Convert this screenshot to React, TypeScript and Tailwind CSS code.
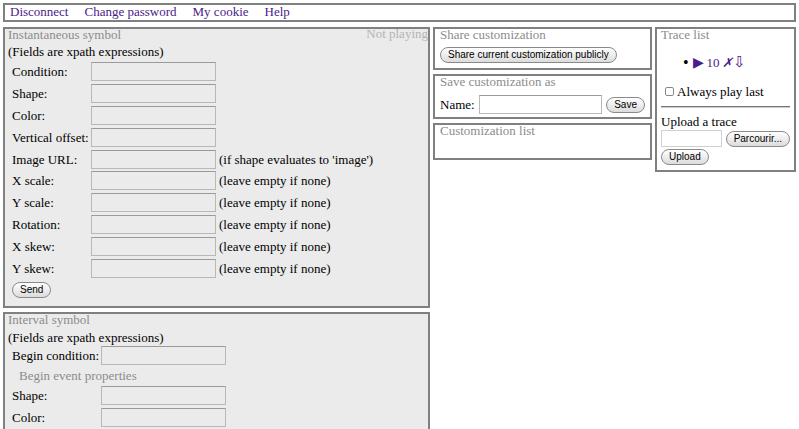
import React from 'react';

const serif = { fontFamily: '"Liberation Serif", "Times New Roman", serif' };

function Btn({ children, className = '' }: { children: React.ReactNode; className?: string }) {
  return (
    <button
      className={
        'h-[16px] rounded-full border border-[#8a8a8a] bg-gradient-to-b from-white to-[#dcdcdc] px-[7px] text-[10px] leading-[14px] text-black ' +
        className
      }
      style={{ fontFamily: '"Liberation Sans", Arial, sans-serif' }}
    >
      {children}
    </button>
  );
}

function Field({ w = 'w-[125px]' }: { w?: string }) {
  return <div className={'h-[19px] border border-[#b8b8b8] border-t-[#9a9a9a] bg-[#ebebeb] ' + w} />;
}

function Row({ label, hint, labelW = 'w-[79px]' }: { label: string; hint?: string; labelW?: string }) {
  return (
    <div className="flex h-[21.8px] items-center pl-[4px]">
      <span className={labelW}>{label}</span>
      <Field />
      {hint && <span className="ml-[3px]">{hint}</span>}
    </div>
  );
}

const instant: [string, string?][] = [
  ['Condition:'],
  ['Shape:'],
  ['Color:'],
  ['Vertical offset:'],
  ['Image URL:', "(if shape evaluates to 'image')"],
  ['X scale:', '(leave empty if none)'],
  ['Y scale:', '(leave empty if none)'],
  ['Rotation:', '(leave empty if none)'],
  ['X skew:', '(leave empty if none)'],
  ['Y skew:', '(leave empty if none)'],
];

function Title({ children }: { children: React.ReactNode }) {
  return <div className="h-[12px] leading-[12px] text-[#8c8c8c]">{children}</div>;
}

export default function App() {
  return (
    <div className="h-[429px] overflow-hidden bg-white px-[3px] pt-[3px] text-[13px] leading-[15px] text-black" style={serif}>
      {/* Top nav */}
      <nav className="flex h-[19px] items-center gap-[16px] border-2 border-[#808080] pb-[2px] pl-[5px] text-[#4b1a8b]">
        <a>Disconnect</a>
        <a>Change password</a>
        <a>My cookie</a>
        <a>Help</a>
      </nav>

      <div className="mt-[5px] flex gap-[3px]">
        {/* Left column */}
        <div className="flex w-[427px] flex-col gap-[4px]">
          <section className="relative h-[281px] border-2 border-[#808080] bg-[#ebebeb] px-[3px]">
            <span className="absolute right-0 top-[-3px] text-[#b4b4b4]">Not playing</span>
            <Title>Instantaneous symbol</Title>
            <div className="mt-[3px] h-[16px]">(Fields are xpath expressions)</div>
            <div className="mt-[1px]">
              {instant.map(([l, h]) => (
                <Row key={l} label={l} hint={h} />
              ))}
            </div>
            <div className="mt-[2px] pl-[4px]">
              <Btn>Send</Btn>
            </div>
          </section>

          <section className="h-[140px] border-2 border-[#808080] bg-[#ebebeb] px-[3px]">
            <Title>Interval symbol</Title>
            <div className="mt-[4px] h-[16px]">(Fields are xpath expressions)</div>
            <div className="-mt-[1px]">
              <Row label="Begin condition:" labelW="w-[89px]" />
            </div>
            <div className="flex h-[17px] items-center pl-[11px] text-[#8c8c8c]">Begin event properties</div>
            <div className="mt-[1px]">
              <Row label="Shape:" labelW="w-[89px]" />
              <Row label="Color:" labelW="w-[89px]" />
            </div>
          </section>
        </div>

        {/* Middle column */}
        <div className="flex w-[219px] flex-col gap-[4px]">
          <section className="h-[43px] border-2 border-[#808080] px-[5px]">
            <Title>Share customization</Title>
            <div className="mt-[5px]">
              <Btn className="px-[5px]">Share current customization publicly</Btn>
            </div>
          </section>
          <section className="h-[45px] border-2 border-[#808080] px-[5px]">
            <Title>Save customization as</Title>
            <div className="mt-[7px] flex items-center">
              <span className="mr-[4px]">Name:</span>
              <div className="h-[19px] w-[126px] border border-[#b8b8b8] border-t-[#9a9a9a] bg-white" />
              <Btn className="ml-[4px] px-[6px]">Save</Btn>
            </div>
          </section>
          <section className="h-[37px] border-2 border-[#808080] px-[5px]">
            <Title>Customization list</Title>
          </section>
        </div>

        {/* Right column */}
        <section className="h-[145px] w-[141px] border-2 border-[#808080] px-[4px]">
          <Title>Trace list</Title>
          <ul className="mt-[14px] flex items-center pl-[22px] text-[#4b1a8b]">
            <li className="flex items-center">
              <span className="mr-[4px] text-[16px] text-black">•</span>
              <span className="text-[14px] leading-[15px]">▶</span>
              <span className="ml-[3px]">10</span>
              <span className="ml-[2px] italic">✗</span>
              <span className="text-[15px] leading-[15px]">⇩</span>
            </li>
          </ul>
          <label className="mt-[14px] flex items-center pl-[4px]">
            <span className="mr-[3px] inline-block h-[9px] w-[9px] rounded-[2px] border border-[#888] bg-white" />
            Always play last
          </label>
          <div className="mt-[7px] h-[2px] border-t border-b border-[#777] border-b-[#ccc]" />
          <div className="mt-[6px]">Upload a trace</div>
          <div className="mt-[1px] flex items-center">
            <div className="h-[17px] w-[61px] border border-[#d0d0d0] bg-white" />
            <Btn className="ml-[4px] px-[5px]">Parcourir...</Btn>
          </div>
          <div className="mt-[1px]">
            <Btn>Upload</Btn>
          </div>
        </section>
      </div>
    </div>
  );
}
